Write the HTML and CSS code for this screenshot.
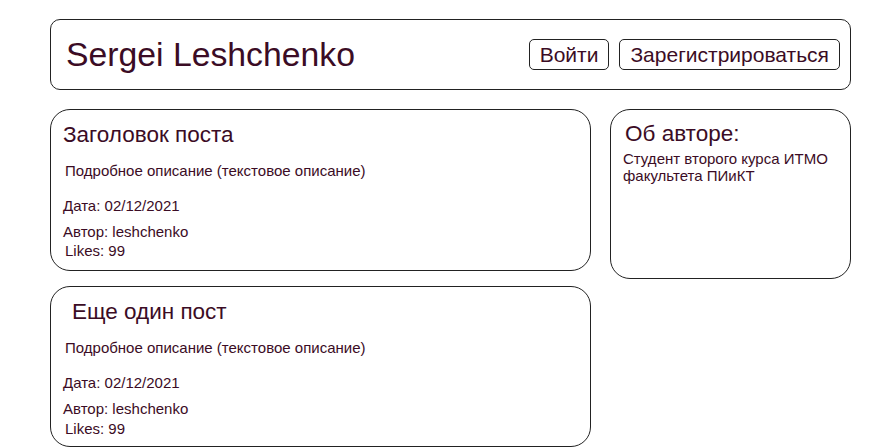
FILE: index.html
```html
<!DOCTYPE html>
<html lang="ru">
<head>
  <meta charset="UTF-8" />
  <title>Sergei Leshchenko</title>
  <link rel="stylesheet" href="styles.css">
</head>
<body>
  <div class="page">
    <header class="header">
      <h1 class="logo">Sergei Leshchenko</h1>
      <div class="auth">
        <button class="btn">Войти</button>
        <button class="btn">Зарегистрироваться</button>
      </div>
    </header>

    <div class="content">
      <div class="posts">
        <!-- пост 1 -->
        <div class="post">
          <h2 class="post-title">Заголовок поста</h2>
          <p class="post-text">Подробное описание (текстовое описание)</p>
          <div class="post-date">Дата: 02/12/2021</div>
          <div class="post-author">Автор: leshchenko</div>
          <div class="post-likes">Likes: 99</div>
        </div>

        <!-- пост 2 -->
        <div class="post">
          <h2 class="post-title second">Еще один пост</h2>
          <p class="post-text">Подробное описание (текстовое описание)</p>
          <div class="post-date">Дата: 02/12/2021</div>
          <div class="post-author">Автор: leshchenko</div>
          <div class="post-likes">Likes: 99</div>
        </div>
      </div>

      <aside class="about">
        <h2 class="about-title">Об авторе:</h2>
        <p class="about-text">Студент второго курса ИТМО факультета ПИиКТ</p>
      </aside>
    </div>
  </div>
</body>
</html>
```

FILE: styles.css
```css
body {
  font-family: "Liberation Sans", Arial, sans-serif;
  background: #ffffff;
  color: #3b0c25;
  margin: 0;
  padding: 0;
}
.page {
  width: 801px;
  margin: 19px 0 0 50px;
}
.header {
  display: flex;
  justify-content: space-between;
  align-items: center;
  height: 69px;
  border: 1px solid #222;
  border-radius: 10px;
  padding: 0 10px 0 15px;
}
.logo {
  margin: 0;
  font-size: 33.75px;
  font-weight: normal;
}
.auth { display: flex; gap: 10px; }
.btn {
  font-family: inherit;
  font-size: 21px;
  color: #3b0c25;
  background: white;
  border: 1px solid #222;
  border-radius: 5px;
  height: 31px;
  padding: 0 10px;
}
.content {
  display: flex;
  gap: 19px;
  margin-top: 19px;
}
.posts { display: flex; flex-direction: column; gap: 15px; width: 541px; }
.post {
  border: 1px solid #222;
  border-radius: 20px;
  height: 162px;
  padding: 0 12px;
  box-sizing: border-box;
  font-size: 15px;
}
.post + .post { height: 161px; }
.post-title {
  font-size: 22.5px;
  font-weight: normal;
  margin: 12px 0 0 0;
}
.post-title.second { margin-left: 9px; }
.post-text { margin: 14px 0 0 2px; }
.post-date { margin-top: 18px; }
.post-author { margin-top: 9px; }
.post-likes { margin: 2px 0 0 2px; }
.post + .post .post-likes { margin-top: 3px; }
.about {
  width: 241px;
  height: 170px;
  border: 1px solid #222;
  border-radius: 20px;
  padding: 0 12px;
  box-sizing: border-box;
}
.about-title {
  font-size: 22.5px;
  font-weight: normal;
  margin: 11px 0 0 2px;
}
.about-text {
  font-size: 15px;
  margin: 3px 0 0 0;
  line-height: 17px;
}
```
